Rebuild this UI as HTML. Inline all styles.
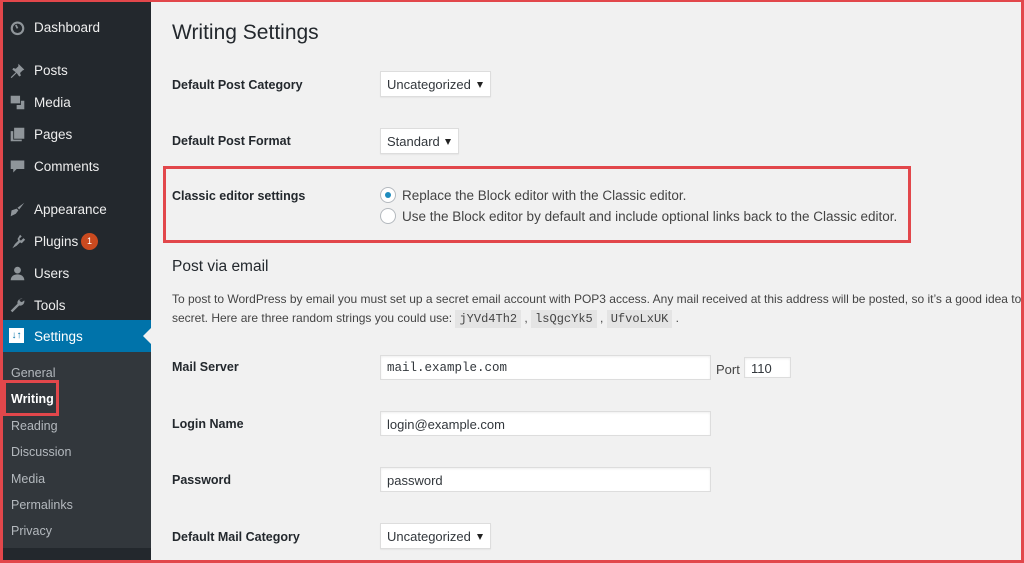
<!DOCTYPE html>
<html><head><meta charset="utf-8"><style>
*{margin:0;padding:0;box-sizing:border-box}
html,body{width:1024px;height:563px;overflow:hidden}
body{background:#f1f1f1;font-family:"Liberation Sans",sans-serif;font-size:13px;color:#23282d;position:relative}
.frame{position:absolute;left:0;top:0;width:1024px;height:563px;border:3px solid #e2474b;border-top-width:2px;z-index:10;pointer-events:none}
.side{position:absolute;left:0;top:0;width:151px;height:563px;background:#23282d}
.sub{position:absolute;left:0;top:352px;width:151px;height:196px;background:#32373c}
.mi{position:absolute;left:34px;color:#eee;font-size:13.5px}
.ic{position:absolute;left:9px;width:17px;height:17px;fill:#8f959a}
.sel{position:absolute;left:0;top:320px;width:151px;height:32px;background:#0073aa}
.si{position:absolute;left:11px;color:#b4b9be;font-size:12.5px}
.a{position:absolute}
.lbl{position:absolute;left:172px;font-weight:bold;font-size:12.5px;color:#23282d}
.selbox{position:absolute;background:#fff;border:1px solid #ddd;height:26px;font-size:13px;color:#32373c;padding:5px 0 0 6px;box-shadow:0 1px 1px rgba(0,0,0,.05)}
.selbox:after{content:"";position:absolute;right:7px;top:10px;border-left:3.5px solid transparent;border-right:3.5px solid transparent;border-top:6px solid #222}
.inp{position:absolute;background:#fff;border:1px solid #ddd;height:25px;font-size:13px;color:#32373c;padding:5px 0 0 6px;box-shadow:inset 0 1px 2px rgba(0,0,0,.07)}
.mono{font-family:"Liberation Mono",monospace;font-size:12.5px}
.radio{position:absolute;left:380px;width:16px;height:16px;border-radius:50%;border:1px solid #b4b9be;background:#fff}
code{font-family:"Liberation Mono",monospace;background:#e4e4e4;padding:2px 4px;font-size:12px}
.clip{position:absolute;left:0;top:0;width:1021px;height:563px;overflow:hidden}
</style></head><body>
<div class="side">
<svg class="ic" style="top:19px" viewBox="0 0 20 20"><circle cx="10" cy="11" r="8"/><circle cx="10" cy="11" r="5.5" fill="#23282d"/><path d="M10 11l-2-4" stroke="#8f959a" stroke-width="2"/></svg>
<div class="mi" style="top:20px">Dashboard</div>
<svg class="ic" style="top:62px" viewBox="0 0 20 20"><path d="M11 2l7 7-2 1-3 3 1 3-2 1-3-4-6 6-1-1 6-6-4-3 1-2 3 1 3-3z"/></svg>
<div class="mi" style="top:63px">Posts</div>
<svg class="ic" style="top:94px" viewBox="0 0 20 20"><path d="M2 2h11v9H2zM14 8h4v10h-9v-5h5z"/></svg>
<div class="mi" style="top:95px">Media</div>
<svg class="ic" style="top:126px" viewBox="0 0 20 20"><path d="M6 2h12v13H6zM2 6h3v10h10v2H2z"/></svg>
<div class="mi" style="top:127px">Pages</div>
<svg class="ic" style="top:158px" viewBox="0 0 20 20"><path d="M2 3h16v10H9l-4 4v-4H2z"/></svg>
<div class="mi" style="top:159px">Comments</div>
<svg class="ic" style="top:201px" viewBox="0 0 20 20"><path d="M18 2l-8 6 2 2zM9 9l-6 2-1 7 6-3 3-4z"/></svg>
<div class="mi" style="top:202px">Appearance</div>
<svg class="ic" style="top:233px" viewBox="0 0 20 20"><path d="M13 2l2 2-3 3 2 2 3-3 2 2-4 4-2-1-4 4-5 3 3-5 4-4-1-2z"/></svg>
<div class="mi" style="top:234px">Plugins</div>
<div class="a" style="left:81px;top:233px;width:17px;height:17px;border-radius:50%;background:#ca4a1f;color:#fff;font-size:9px;text-align:center;line-height:17px">1</div>
<svg class="ic" style="top:265px" viewBox="0 0 20 20"><circle cx="10" cy="6" r="4"/><path d="M2 18c0-5 4-7 8-7s8 2 8 7z"/></svg>
<div class="mi" style="top:266px">Users</div>
<svg class="ic" style="top:297px" viewBox="0 0 20 20"><path d="M16 2a5 5 0 00-6 6L2 16l2 2 8-8a5 5 0 006-6l-3 2-2-1-1-2z"/></svg>
<div class="mi" style="top:298px">Tools</div>
<div class="sel"></div>
<div class="a" style="left:9px;top:328px;width:15px;height:15px;background:#fff;color:#0073aa;font-size:10px;font-weight:bold;line-height:15px;text-align:center">↓↑</div>
<div class="mi" style="top:329px;color:#fff">Settings</div>
<div class="a" style="left:143px;top:328px;border-top:8px solid transparent;border-bottom:8px solid transparent;border-right:8px solid #f1f1f1"></div>
<div class="sub"></div>
<div class="si" style="top:366px">General</div>
<div class="a" style="left:3px;top:380px;width:56px;height:36px;border:3px solid #e2474b"></div>
<div class="si" style="top:392px;color:#fff;font-weight:bold">Writing</div>
<div class="si" style="top:419px">Reading</div>
<div class="si" style="top:445px">Discussion</div>
<div class="si" style="top:472px">Media</div>
<div class="si" style="top:498px">Permalinks</div>
<div class="si" style="top:524px">Privacy</div>
</div>
<div class="clip">
<div class="a" style="left:172px;top:21px;font-size:21px;color:#23282d">Writing Settings</div>
<div class="lbl" style="top:78px">Default Post Category</div>
<div class="selbox" style="left:380px;top:71px;width:111px">Uncategorized</div>
<div class="lbl" style="top:134px">Default Post Format</div>
<div class="selbox" style="left:380px;top:128px;width:79px">Standard</div>

<div class="a" style="left:163px;top:166px;width:748px;height:77px;border:3px solid #e2474b"></div>
<div class="lbl" style="top:189px">Classic editor settings</div>
<div class="radio" style="top:187px"><div class="a" style="left:4px;top:4px;width:6px;height:6px;border-radius:50%;background:#1e8cbe"></div></div>
<div class="a" style="left:402px;top:188px;color:#444;font-size:13.5px">Replace the Block editor with the Classic editor.</div>
<div class="radio" style="top:208px"></div>
<div class="a" style="left:402px;top:209px;color:#444;font-size:13.5px;white-space:nowrap">Use the Block editor by default and include optional links back to the Classic editor.</div>

<div class="a" style="left:172px;top:258px;font-size:15.5px;color:#23282d">Post via email</div>
<div class="a" style="left:172px;top:292px;font-size:12px;color:#444;white-space:nowrap">To post to WordPress by email you must set up a secret email account with POP3 access. Any mail received at this address will be posted, so it’s a good idea to keep this address very</div>
<div class="a" style="left:172px;top:311px;font-size:12px;color:#444;white-space:nowrap">secret. Here are three random strings you could use: <code>jYVd4Th2</code> , <code>lsQgcYk5</code> , <code>UfvoLxUK</code> .</div>

<div class="lbl" style="top:360px">Mail Server</div>
<div class="inp mono" style="left:380px;top:355px;width:331px">mail.example.com</div>
<div class="a" style="left:716px;top:362px;color:#444">Port</div>
<div class="inp" style="left:744px;top:357px;width:47px;height:21px;padding-top:3px">110</div>
<div class="lbl" style="top:417px">Login Name</div>
<div class="inp" style="left:380px;top:411px;width:331px">login@example.com</div>
<div class="lbl" style="top:473px">Password</div>
<div class="inp" style="left:380px;top:467px;width:331px">password</div>
<div class="lbl" style="top:530px">Default Mail Category</div>
<div class="selbox" style="left:380px;top:523px;width:111px">Uncategorized</div>
</div>
<div class="frame"></div>
</body></html>
